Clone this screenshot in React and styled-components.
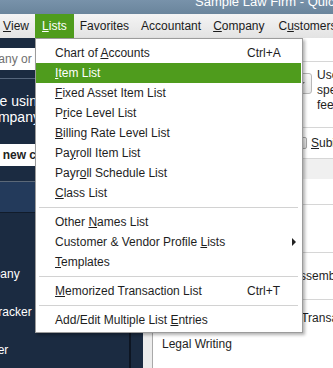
import React from "react";
import styled, { createGlobalStyle } from "styled-components";

const GlobalStyle = createGlobalStyle`
  html, body { margin: 0; padding: 0; background: #fff; }
  body { font-family: "Liberation Sans", Arial, sans-serif; font-size: 12px; }
  #root { width: 333px; height: 368px; overflow: hidden; }
`;

const Window = styled.div`
  width: 333px;
  height: 368px;
  display: flex;
  flex-direction: column;
  overflow: hidden;
  background: #fff;
`;

const TitleBar = styled.div`
  height: 14px;
  flex: none;
  display: flex;
  padding-left: 195px;
  overflow: hidden;
  background: linear-gradient(#7892aa, #6a859c);
`;

const Title = styled.div`
  color: #fff;
  font-size: 13px;
  line-height: 14px;
  margin-top: -5px;
  white-space: nowrap;
`;

const MenuBar = styled.div`
  height: 24px;
  flex: none;
  display: flex;
  align-items: stretch;
  background: linear-gradient(#f4f4f4, #e3e3e3);
  position: relative;
  z-index: 5;
`;

const MenuItem = styled.div`
  position: relative;
  display: flex;
  align-items: center;
  padding: 0 ${(p) => p.$padR ?? 6}px 0 ${(p) => p.$padL ?? 6}px;
  color: ${(p) => (p.$active ? "#fff" : "#1b1b1b")};
  background: ${(p) => (p.$active ? "#4f9c1d" : "transparent")};
  white-space: nowrap;
`;

const Key = styled.span`
  text-decoration: underline;
  text-underline-offset: 1px;
`;

const Dropdown = styled.div`
  position: absolute;
  top: 100%;
  left: 0;
  width: 268px;
  box-sizing: border-box;
  background: #fff;
  border: 1px solid #9c9c9c;
  padding: 4px 1px 2px 0;
  box-shadow: 2px 2px 3px rgba(0, 0, 0, 0.3);
  color: #1e1e1e;
`;

const Row = styled.div`
  height: 20px;
  display: grid;
  grid-template-columns: 211px 1fr;
  align-items: center;
  background: ${(p) => (p.$hl ? "#4f9c1d" : "transparent")};
  color: ${(p) => (p.$hl ? "#fff" : "#1e1e1e")};
  white-space: nowrap;
`;

const Label = styled.span`
  padding-left: 19px;
`;

const Shortcut = styled.span``;

const Arrow = styled.span`
  justify-self: end;
  margin-right: 5px;
  width: 0;
  height: 0;
  border-left: 4px solid #222;
  border-top: 4px solid transparent;
  border-bottom: 4px solid transparent;
`;

const Sep = styled.div`
  height: 9px;
  display: flex;
  align-items: center;
  padding: 0 3px;
  &::before {
    content: "";
    flex: 1;
    height: 1px;
    background: #d2d2d2;
  }
`;

const Body = styled.div`
  flex: 1;
  display: grid;
  grid-template-columns: 143px 1fr;
  min-height: 0;
`;

const Sidebar = styled.div`
  background: #1b2b41;
  overflow: hidden;
  display: grid;
  grid-template-columns: 129px 2px 1fr;
`;

const SideEdge = styled.div`
  background: #0d1522;
`;

const SideInner = styled.div`
  margin-left: -90px;
  display: flex;
  flex-direction: column;
  min-width: 0;
`;

const Search = styled.div`
  margin-top: 10px;
  margin-right: -14px;
  height: 22px;
  background: #fff;
  color: #6f6f6f;
  line-height: 22px;
  padding-left: 15px;
  white-space: nowrap;
  overflow: hidden;
`;

const Divider = styled.div`
  height: 1px;
  background: ${(p) => p.$color};
  margin-top: ${(p) => p.$top ?? 0}px;
  margin-right: -14px;
`;

const Promo = styled.div`
  height: 65px;
  display: flex;
  flex-direction: column;
  padding-top: 14px;
  box-sizing: border-box;
`;

const PromoLine = styled.div`
  color: #fff;
  font-size: 14px;
  line-height: 16px;
  white-space: nowrap;
  padding-left: ${(p) => p.$indent}px;
`;

const CreateButton = styled.div`
  height: 22px;
  background: #fff;
  color: #222;
  font-weight: bold;
  line-height: 22px;
  padding-left: 52px;
  white-space: nowrap;
`;

const Band = styled.div`
  height: 30px;
  background: #233a5b;
  border-top: 1px solid #5b6878;
  border-bottom: 1px solid #111c2b;
  margin: 15px -14px 0 0;
`;

const NavList = styled.div`
  display: flex;
  flex-direction: column;
  padding-top: 4px;
`;

const NavItem = styled.div`
  height: 38px;
  display: flex;
  align-items: center;
  padding-left: 39px;
  color: #fff;
  white-space: nowrap;
`;

const Content = styled.div`
  display: grid;
  grid-template-columns: 10px 1fr;
`;

const Gutter = styled.div`
  background: #ececec;
  border-right: 1px solid #a9a9a9;
`;

const Main = styled.div`
  display: flex;
  flex-direction: column;
  background: #fff;
  color: #1e1e1e;
`;

const Section = styled.div`
  height: ${(p) => p.$h}px;
  flex: none;
  border-bottom: ${(p) => (p.$line ? "1px solid #d6d6d6" : "none")};
  background: ${(p) => p.$bg ?? "transparent"};
  display: flex;
  align-items: ${(p) => p.$align ?? "flex-start"};
  white-space: nowrap;
`;

const Select = styled.div`
  margin: 11px 0 0 9px;
  width: 150px;
  height: 21px;
  box-sizing: border-box;
  border: 1px solid #b8b8b8;
  border-radius: 3px;
  background: linear-gradient(#f8f8f8, #e8e8e8);
  display: flex;
  align-items: center;
  justify-content: space-between;
  padding: 0 6px;
  flex: none;
`;

const Caret = styled.span`
  width: 0;
  height: 0;
  border-top: 3px solid #777;
  border-left: 3px solid transparent;
  border-right: 3px solid transparent;
`;

const DescText = styled.div`
  margin: 6px 0 0 5px;
  line-height: 15px;
`;

const Check = styled.span`
  width: 12px;
  height: 12px;
  box-sizing: border-box;
  border: 1px solid #a8a8a8;
  border-radius: 2px;
  background: linear-gradient(#f4f4f4, #e2e2e2);
  margin-left: ${(p) => p.$ml}px;
  margin-right: ${(p) => p.$mr}px;
  flex: none;
`;

const FieldLabel = styled.span`
  margin-left: ${(p) => p.$ml ?? 0}px;
`;

export default function App() {
  return (
    <>
      <GlobalStyle />
      <Window>
        <TitleBar>
          <Title>Sample Law Firm  - QuickBooks Accountant Desktop 2016</Title>
        </TitleBar>
        <MenuBar>
          <MenuItem $padL={3}><Key>V</Key>iew</MenuItem>
          <MenuItem $active $padL={7} $padR={7}>
            <span><Key>L</Key>ists</span>
            <Dropdown>
              <Row><Label>Chart of <Key>A</Key>ccounts</Label><Shortcut>Ctrl+A</Shortcut></Row>
              <Row $hl><Label><Key>I</Key>tem List</Label></Row>
              <Row><Label><Key>F</Key>ixed Asset Item List</Label></Row>
              <Row><Label>P<Key>r</Key>ice Level List</Label></Row>
              <Row><Label><Key>B</Key>illing Rate Level List</Label></Row>
              <Row><Label>Pa<Key>y</Key>roll Item List</Label></Row>
              <Row><Label>Payr<Key>o</Key>ll Schedule List</Label></Row>
              <Row><Label><Key>C</Key>lass List</Label></Row>
              <Sep />
              <Row><Label>Other <Key>N</Key>ames List</Label></Row>
              <Row><Label>Customer &amp; Vendor Profile <Key>L</Key>ists</Label><Arrow /></Row>
              <Row><Label><Key>T</Key>emplates</Label></Row>
              <Sep />
              <Row><Label><Key>M</Key>emorized Transaction List</Label><Shortcut>Ctrl+T</Shortcut></Row>
              <Sep />
              <Row><Label>Add/Edit Multiple List <Key>E</Key>ntries</Label></Row>
            </Dropdown>
          </MenuItem>
          <MenuItem>Favorites</MenuItem>
          <MenuItem>Accountant</MenuItem>
          <MenuItem><Key>C</Key>ompany</MenuItem>
          <MenuItem $padL={8}>C<Key>u</Key>stomers</MenuItem>
        </MenuBar>
        <Body>
          <Sidebar>
            <SideInner>
              <Search>Search Company or Help</Search>
              <Divider $color="#55657b" $top={8} />
              <Promo>
                <PromoLine $indent={4}>Get more done using</PromoLine>
                <PromoLine $indent={42}>your company file</PromoLine>
              </Promo>
              <CreateButton>Create new company</CreateButton>
              <Band />
              <NavList>
                <NavItem>Home</NavItem>
                <NavItem>My Company</NavItem>
                <NavItem>Income Tracker</NavItem>
                <NavItem>Bill Tracker</NavItem>
              </NavList>
            </SideInner>
            <SideEdge />
            <div />
          </Sidebar>
          <Content>
            <Gutter />
            <Main>
              <Section $h={23} $line />
              <Section $h={65} $line>
                <Select><span>Service</span><Caret /></Select>
                <DescText>
                  Use for services you charge for or purchase, like<br />
                  specialized labor, consulting hours, or professional<br />
                  fees.
                </DescText>
              </Section>
              <Section $h={30} $line $align="center">
                <Check $ml={142} $mr={4} />
                <FieldLabel><Key>S</Key>ubitem of</FieldLabel>
              </Section>
              <Section $h={20} $bg="#f0f0f0" />
              <Section $h={25} $line />
              <Section $h={47} $line />
              <Section $h={46} $line $align="center">
                <Check $ml={6} $mr={1} />
                <FieldLabel>This service is used in assemblies or is performed by a subcontractor</FieldLabel>
              </Section>
              <Section $h={36} $align="center">
                <FieldLabel $ml={35}>Description on Sales Transactions</FieldLabel>
              </Section>
              <Section $h={16} $align="center">
                <FieldLabel $ml={9}>Legal Writing</FieldLabel>
              </Section>
            </Main>
          </Content>
        </Body>
      </Window>
    </>
  );
}
